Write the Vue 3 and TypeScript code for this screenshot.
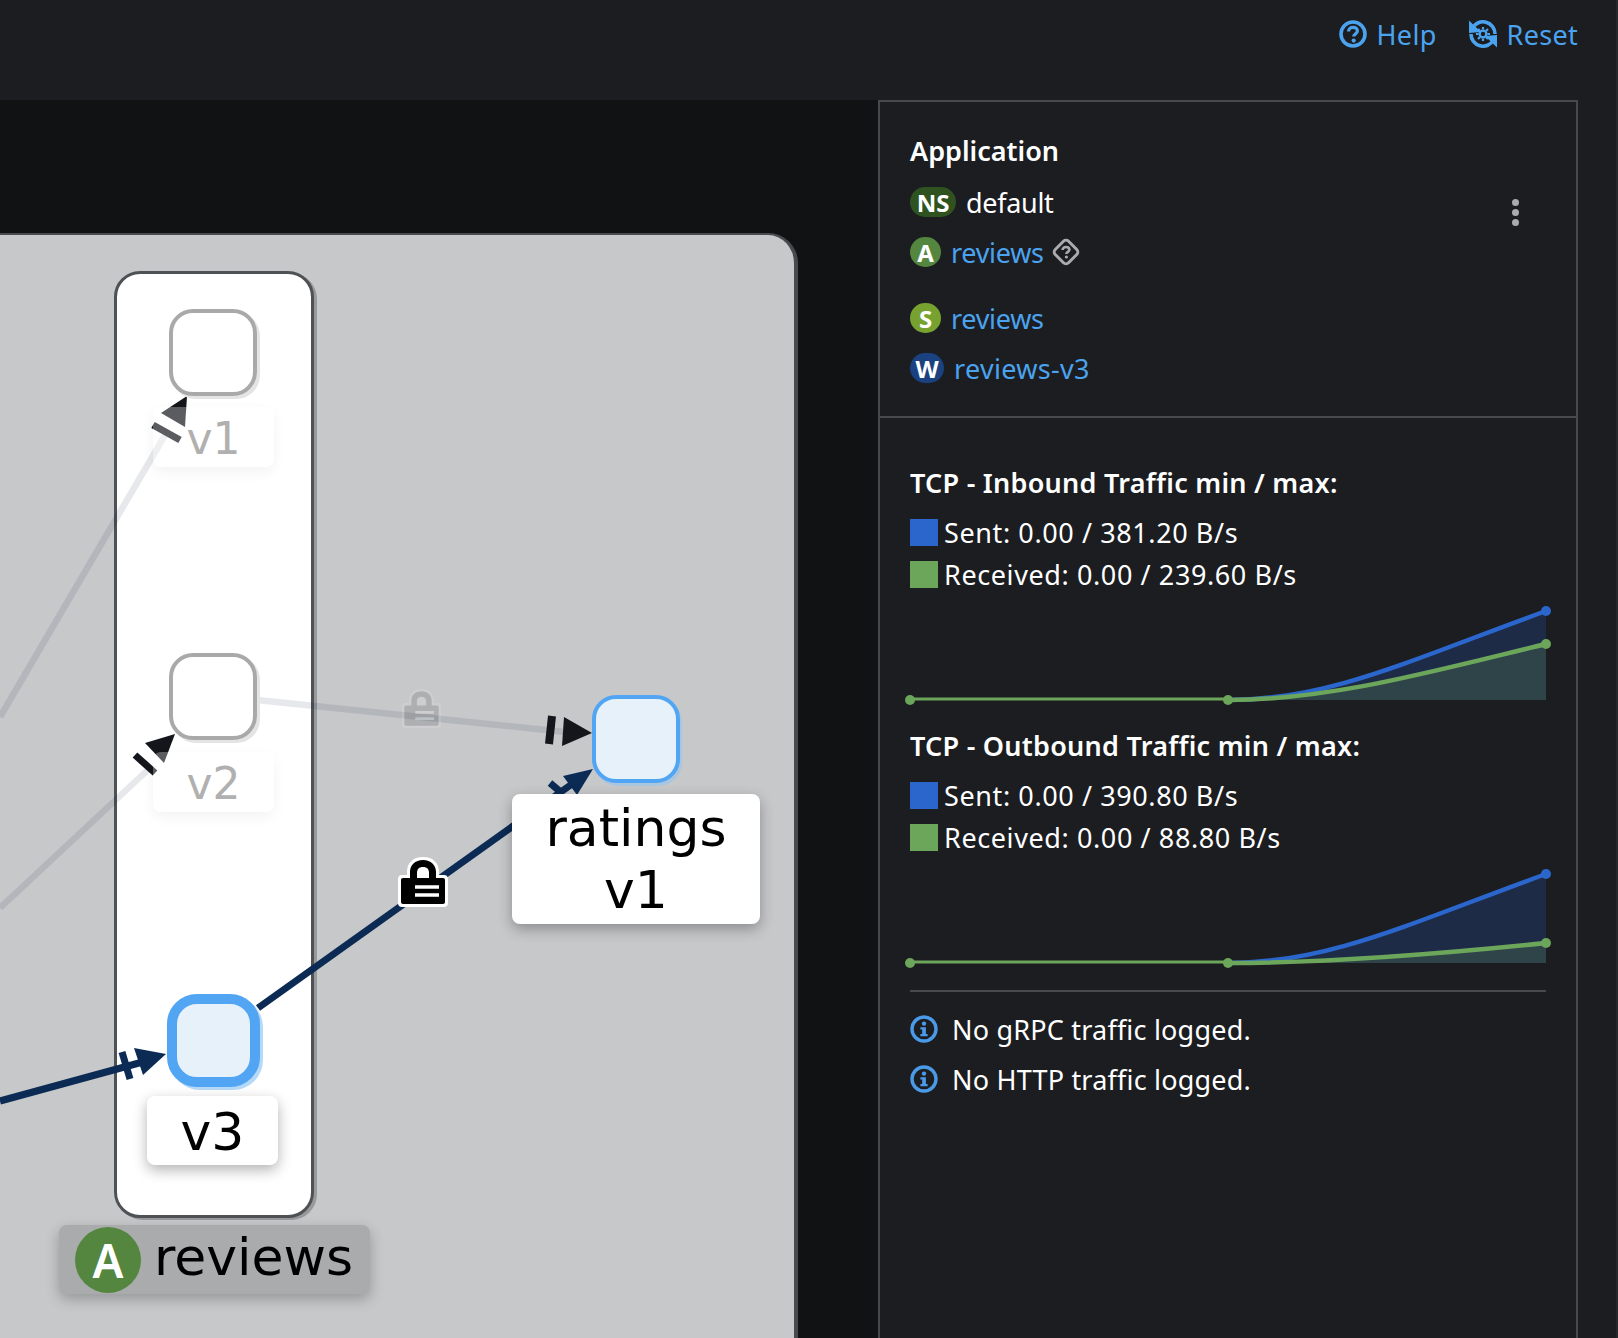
<script setup lang="ts">
interface BadgeRow {
  badge: string;
  cls: string;
  text: string;
  link: boolean;
}

interface TrafficChart {
  title: string;
  sent: string;
  received: string;
  blue: string;
  green: string;
  blueY: number;
  greenY: number;
}

const rows: BadgeRow[] = [
  { badge: 'NS', cls: 'ns', text: 'default', link: false },
  { badge: 'A', cls: 'app', text: 'reviews', link: true },
  { badge: 'S', cls: 'svc', text: 'reviews', link: true },
  { badge: 'W', cls: 'wl', text: 'reviews-v3', link: true },
];

const charts: TrafficChart[] = [
  {
    title: 'TCP - Inbound Traffic min / max:',
    sent: 'Sent: 0.00 / 381.20 B/s',
    received: 'Received: 0.00 / 239.60 B/s',
    blue: 'M318 92 C 420 92, 500 52, 636 3',
    green: 'M318 92 C 420 92, 520 64, 636 36',
    blueY: 3,
    greenY: 36,
  },
  {
    title: 'TCP - Outbound Traffic min / max:',
    sent: 'Sent: 0.00 / 390.80 B/s',
    received: 'Received: 0.00 / 88.80 B/s',
    blue: 'M318 92 C 420 92, 500 52, 636 3',
    green: 'M318 92 C 400 92, 520 84, 636 72',
    blueY: 3,
    greenY: 72,
  },
];

const notes: string[] = ['No gRPC traffic logged.', 'No HTTP traffic logged.'];

const areaOf = (line: string): string => `${line} L636 92 Z`;
</script>

<template>
  <div class="page">
    <header class="topbar">
      <a class="action">
        <svg class="action-icon" viewBox="0 0 28 28">
          <circle cx="14" cy="14" r="12" fill="none" stroke="#4ba3ef" stroke-width="3.6" />
          <path d="M9.6 11.4 C9.6 8.8 11.6 7.4 14 7.4 C16.5 7.4 18.4 8.8 18.4 11 C18.4 13.6 14.8 13.8 14.8 16.6" fill="none" stroke="#4ba3ef" stroke-width="3.2" />
          <circle cx="14.7" cy="20.6" r="2.1" fill="#4ba3ef" />
        </svg>
        <span>Help</span>
      </a>
      <a class="action">
        <svg class="action-icon" viewBox="0 0 28 28">
          <path d="M3.5 8 A12 12 0 0 1 26 14" fill="none" stroke="#4ba3ef" stroke-width="3.6" />
          <path d="M2 14 A12 12 0 0 0 24.5 20" fill="none" stroke="#4ba3ef" stroke-width="3.6" />
          <path d="M0 0.5 L12 12 L0 13 Z" fill="#4ba3ef" />
          <path d="M28 27.5 L16 16 L28 15 Z" fill="#4ba3ef" />
          <circle cx="14" cy="14" r="3.4" fill="none" stroke="#4ba3ef" stroke-width="2.4" />
          <path d="M14 7 V9.6 M14 18.4 V21 M7 14 H9.6 M18.4 14 H21 M9 9 L10.9 10.9 M17.1 17.1 L19 19 M19 9 L17.1 10.9 M10.9 17.1 L9 19" stroke="#4ba3ef" stroke-width="2.2" />
        </svg>
        <span>Reset</span>
      </a>
    </header>

    <div class="content">
      <section class="graph">
        <div class="canvas"></div>
        <div class="group"></div>

        <svg class="edges" viewBox="0 100 878 1238">
          <g class="faint">
            <path d="M0 717 L168 430" />
            <path d="M0 908 L152 766" />
            <path d="M257 700 L565 732" />
          </g>
          <!-- arrow heads sit under the labels so that v1 and v2 wash them out -->
          <g fill="#14161c" stroke="#14161c">
            <path d="M187 396 L161 413 L185 427 Z" stroke="none" />
            <path d="M153 425 L180 440" stroke-width="7" />
            <path d="M175 734 L145 743 L164 763 Z" stroke="none" />
            <path d="M135 755 L155 773" stroke-width="7" />
            <path d="M592 733 L564 717 L562 746 Z" stroke="none" />
            <path d="M552 716 L549 744" stroke-width="8" />
          </g>
          <g fill="#0b2a54" stroke="#0b2a54">
            <path d="M0 1101 L150 1060" stroke-width="7" />
            <path d="M166 1054 L134 1048 L143 1075 Z" stroke="none" />
            <path d="M122 1052 L130 1079" stroke-width="7" />
            <path d="M258 1008 L572 784" stroke-width="7" />
            <path d="M593 769 L563 776 L577 795 Z" stroke="none" />
            <path d="M550 783 L563 794" stroke-width="7" />
          </g>
        </svg>

        <div class="node dim v1"></div>
        <div class="node dim v2"></div>
        <div class="node active v3"></div>
        <div class="node ratings"></div>

        <div class="label dim-label lv1">v1</div>
        <div class="label dim-label lv2">v2</div>
        <div class="label lv3">v3</div>
        <div class="label lratings">ratings<br />v1</div>

        <svg class="lock lock-dim" viewBox="0 0 50 50">
          <path d="M25 0 C15 0 9 6 9 15 V18 H4 C1.5 18 0 19.5 0 22 V46 C0 48.5 1.5 50 4 50 H46 C48.5 50 50 48.5 50 46 V22 C50 19.5 48.5 18 46 18 H41 V15 C41 6 35 0 25 0 Z" fill="#fff" />
          <path d="M25 3 C17 3 12 8 12 15 V21 H5 C3.8 21 3 21.8 3 23 V45 C3 46.2 3.8 47 5 47 H45 C46.2 47 47 46.2 47 45 V23 C47 21.8 46.2 21 45 21 H38 V15 C38 8 33 3 25 3 Z M25 10 C29 10 31 12 31 16 V21 H19 V16 C19 12 21 10 25 10 Z" fill="#000" fill-rule="evenodd" />
          <path d="M17 30 H41 M17 38 H41" stroke="#fff" stroke-width="3.5" />
        </svg>
        <svg class="lock lock-on" viewBox="0 0 50 50">
          <path d="M25 0 C15 0 9 6 9 15 V18 H4 C1.5 18 0 19.5 0 22 V46 C0 48.5 1.5 50 4 50 H46 C48.5 50 50 48.5 50 46 V22 C50 19.5 48.5 18 46 18 H41 V15 C41 6 35 0 25 0 Z" fill="#fff" />
          <path d="M25 3 C17 3 12 8 12 15 V21 H5 C3.8 21 3 21.8 3 23 V45 C3 46.2 3.8 47 5 47 H45 C46.2 47 47 46.2 47 45 V23 C47 21.8 46.2 21 45 21 H38 V15 C38 8 33 3 25 3 Z M25 10 C29 10 31 12 31 16 V21 H19 V16 C19 12 21 10 25 10 Z" fill="#000" fill-rule="evenodd" />
          <path d="M17 30 H41 M17 38 H41" stroke="#fff" stroke-width="3.5" />
        </svg>

        <div class="group-label">
          <span class="group-badge">A</span>
          <span class="group-name">reviews</span>
        </div>
      </section>

      <aside class="panel">
        <div class="summary">
          <div class="summary-title">Application</div>
          <div v-for="(row, i) in rows" :key="row.cls" class="badge-row" :class="{ spaced: i === 2 }">
            <span class="badge" :class="row.cls">{{ row.badge }}</span>
            <span :class="row.link ? 'link' : 'plain'">{{ row.text }}</span>
            <svg v-if="i === 1" class="diamond" viewBox="0 0 28 28">
              <rect x="4.6" y="4.6" width="18.8" height="18.8" rx="3.6" transform="rotate(45 14 14)" fill="none" stroke="#aaabad" stroke-width="3" />
              <path d="M10.6 12 C10.6 10 12.1 9 14 9 C15.9 9 17.4 10 17.4 11.8 C17.4 13.8 14.4 14 14.4 16" fill="none" stroke="#aaabad" stroke-width="2.6" />
              <circle cx="14.4" cy="19" r="1.6" fill="#aaabad" />
            </svg>
          </div>
          <div class="kebab"><i></i><i></i><i></i></div>
        </div>

        <div class="metrics">
          <div v-for="chart in charts" :key="chart.title" class="traffic">
            <div class="traffic-title">{{ chart.title }}</div>
            <div class="legend"><span class="swatch blue"></span>{{ chart.sent }}</div>
            <div class="legend"><span class="swatch green"></span>{{ chart.received }}</div>
            <svg class="spark" viewBox="-5 0 646 98">
              <path :d="areaOf(chart.blue)" fill="#1e2b47" />
              <path :d="areaOf(chart.green)" fill="#2f4448" />
              <path :d="chart.blue" fill="none" stroke="#2a66cc" stroke-width="4.5" />
              <path :d="chart.green" fill="none" stroke="#6ca65b" stroke-width="4.5" />
              <path d="M0 91 H318" stroke="#6ca65b" stroke-width="3" />
              <circle cx="636" :cy="chart.blueY" r="5" fill="#2a66cc" />
              <circle cx="636" :cy="chart.greenY" r="5" fill="#6ca65b" />
              <circle cx="0" cy="92" r="5" fill="#6ca65b" />
              <circle cx="318" cy="92" r="5" fill="#6ca65b" />
            </svg>
          </div>

          <div class="notes">
            <div v-for="note in notes" :key="note" class="note">
              <svg class="info" viewBox="0 0 28 28">
                <circle cx="14" cy="14" r="12" fill="none" stroke="#4b9ae8" stroke-width="3.4" />
                <circle cx="14" cy="8.6" r="2.2" fill="#4b9ae8" />
                <path d="M10.4 12.2 H15.9 V19 H17.6 V21.2 H10.4 V19 H12.2 V14.4 H10.4 Z" fill="#4b9ae8" />
              </svg>
              <span>{{ note }}</span>
            </div>
          </div>
        </div>
      </aside>
    </div>
  </div>
</template>

<style>
html,
body {
  margin: 0;
  background: #1b1d21;
}
</style>

<style scoped>
.page {
  width: 1618px;
  height: 1338px;
  overflow: hidden;
  display: flex;
  flex-direction: column;
  background: #1b1d21;
  box-shadow: inset -2px 0 0 #26282c;
  font-family: "Noto Sans", "Open Sans", sans-serif;
  font-size: 27px;
  color: #fff;
}

.topbar {
  height: 100px;
  flex: none;
  display: flex;
  justify-content: flex-end;
  align-items: center;
  gap: 32px;
  padding: 0 40px 32px 0;
  box-sizing: border-box;
}

.action {
  display: flex;
  align-items: center;
  gap: 10px;
  color: #4ba3ef;
  letter-spacing: 0.3px;
}

.action-icon {
  width: 28px;
  height: 28px;
}

.content {
  flex: 1;
  display: flex;
  min-height: 0;
}

.graph {
  position: relative;
  width: 878px;
  flex: none;
  background: #111214;
  overflow: hidden;
}

.canvas {
  position: absolute;
  left: 0;
  top: 133px;
  width: 798px;
  bottom: 0;
  box-sizing: border-box;
  background: #c7c8ca;
  border-top: 2px solid #4a4b4e;
  border-right: 4px solid #48494c;
  border-top-right-radius: 30px;
}

.group {
  position: absolute;
  left: 114px;
  top: 171px;
  width: 200px;
  height: 947px;
  box-sizing: border-box;
  background: #fff;
  border: 3px solid #4f5255;
  border-radius: 26px;
  box-shadow: 3px 2px 0 #97999b;
}

.edges {
  position: absolute;
  left: 0;
  top: 0;
  width: 878px;
  height: 1238px;
}

.faint path {
  fill: none;
  stroke: #06223c;
  stroke-opacity: 0.1;
  stroke-width: 6.5;
}

.node {
  position: absolute;
  box-sizing: border-box;
  border-radius: 24px;
}

.dim {
  width: 88px;
  height: 87px;
  background: #fff;
  border: 4px solid #a9a9a9;
  box-shadow: 3px 3px 0 #e4e4e4;
}

.v1 {
  left: 169px;
  top: 209px;
}

.v2 {
  left: 169px;
  top: 553px;
}

.active {
  background: #e7f1fa;
  border: 10px solid #52a5f3;
  box-shadow: 3px 3px 0 #b5d9f8;
  border-radius: 30px;
}

.v3 {
  left: 167px;
  top: 894px;
  width: 93px;
  height: 93px;
}

.ratings {
  left: 592px;
  top: 595px;
  width: 88px;
  height: 88px;
  background: #e7f1fa;
  border: 4px solid #52a5f3;
  box-shadow: 2px 3px 0 #a9c6e0;
}

.label {
  position: absolute;
  background: #fff;
  color: #000;
  border-radius: 8px;
  font-family: "DejaVu Sans", sans-serif;
  text-align: center;
  box-shadow: 0 5px 14px rgba(0, 0, 0, 0.3);
}

.dim-label {
  width: 121px;
  height: 60px;
  line-height: 64px;
  font-size: 44px;
  color: #b0b0b0;
  background: rgba(255, 255, 255, 0.3);
  box-shadow: 0 5px 14px rgba(0, 0, 0, 0.05);
}

.lv1 {
  left: 153px;
  top: 307px;
}

.lv2 {
  left: 153px;
  top: 652px;
}

.lv3 {
  left: 147px;
  top: 996px;
  width: 131px;
  height: 69px;
  line-height: 72px;
  font-size: 52px;
}

.lratings {
  left: 512px;
  top: 694px;
  width: 248px;
  height: 130px;
  box-sizing: border-box;
  padding-top: 3px;
  line-height: 62px;
  font-size: 52px;
}

.lock {
  position: absolute;
  width: 50px;
  height: 50px;
}

.lock-dim {
  left: 402px;
  top: 589px;
  width: 39px;
  height: 39px;
  opacity: 0.12;
}

.lock-on {
  left: 398px;
  top: 757px;
}

.group-label {
  position: absolute;
  left: 59px;
  top: 1125px;
  width: 311px;
  height: 69px;
  box-sizing: border-box;
  display: flex;
  align-items: center;
  gap: 13px;
  padding-left: 16px;
  background: #aaabad;
  border-radius: 8px;
  font-family: "DejaVu Sans", sans-serif;
  font-size: 52px;
  color: #000;
  box-shadow: 0 5px 14px rgba(0, 0, 0, 0.25);
}

.group-name {
  padding-bottom: 6px;
}

.group-badge {
  width: 66px;
  height: 66px;
  border-radius: 50%;
  background: #54863f;
  color: #fff;
  font-family: "Noto Sans", sans-serif;
  font-weight: 600;
  font-size: 46px;
  display: flex;
  align-items: center;
  justify-content: center;
}

.panel {
  width: 700px;
  flex: none;
  box-sizing: border-box;
  border: 2px solid #48494d;
  border-bottom: none;
  display: flex;
  flex-direction: column;
}

.summary {
  position: relative;
  height: 316px;
  flex: none;
  box-sizing: border-box;
  padding: 30px 30px 0;
  border-bottom: 2px solid #48494d;
}

.summary-title {
  font-weight: 600;
  line-height: 38px;
  margin-bottom: 17px;
}

.badge-row {
  display: flex;
  align-items: center;
  height: 30px;
  margin-bottom: 20px;
  gap: 10px;
  letter-spacing: -0.3px;
}

.badge-row.spaced {
  margin-top: 36px;
}

.badge {
  height: 30px;
  min-width: 31px;
  box-sizing: border-box;
  padding: 0 5px;
  border-radius: 15px;
  display: flex;
  align-items: center;
  justify-content: center;
  font-size: 24px;
  font-weight: 700;
  letter-spacing: 0;
}

.ns {
  background: #2f5320;
  width: 46px;
}

.app {
  background: #54863f;
}

.svc {
  background: #78a22f;
}

.wl {
  background: #1a4281;
  width: 34px;
}

.link {
  color: #4ba3ef;
}

.wl + .link {
  letter-spacing: 0.3px;
}

.diamond {
  width: 28px;
  height: 28px;
  margin-left: -2px;
  overflow: visible;
}

.kebab {
  position: absolute;
  right: 57px;
  top: 97px;
  display: flex;
  flex-direction: column;
  gap: 3px;
}

.kebab i {
  width: 7px;
  height: 7px;
  border-radius: 50%;
  background: #aaabad;
}

.metrics {
  padding: 0 30px;
}

.traffic {
  padding-top: 46px;
  margin-bottom: -25px;
}

.traffic-title {
  font-weight: 600;
  line-height: 38px;
  margin-bottom: 9px;
  letter-spacing: 0.25px;
}

.legend {
  display: flex;
  align-items: center;
  height: 42px;
  gap: 6px;
  letter-spacing: 0.6px;
}

.swatch {
  width: 28px;
  height: 27px;
}

.swatch.blue {
  background: #2a66cc;
}

.swatch.green {
  background: #6ca65b;
}

.spark {
  display: block;
  width: 646px;
  height: 98px;
  margin: 13px 0 0 -5px;
  overflow: visible;
}

.notes {
  margin-top: 46px;
  border-top: 2px solid #48494d;
  padding-top: 12px;
}

.note {
  display: flex;
  align-items: center;
  height: 50px;
  gap: 14px;
  letter-spacing: 0.2px;
}

.info {
  width: 28px;
  height: 28px;
}
</style>
